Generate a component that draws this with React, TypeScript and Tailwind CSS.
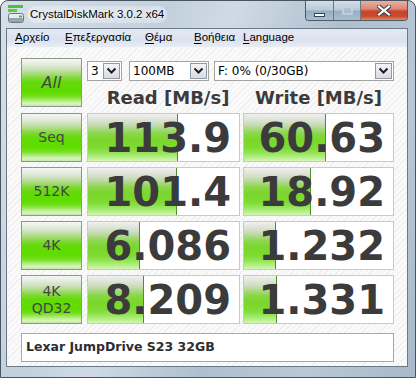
const results = [
  { label: ["Seq"], read: "113.9", readBar: 90, write: "60.63", writeBar: 82 },
  { label: ["512K"], read: "101.4", readBar: 89, write: "18.92", writeBar: 67 },
  { label: ["4K"], read: "6.086", readBar: 52, write: "1.232", writeBar: 32 },
  { label: ["4K", "QD32"], read: "8.209", readBar: 56, write: "1.331", writeBar: 33 },
];

const menu = [
  { text: "Αρχείο", w: "w-[50px]" },
  { text: "Επεξεργασία", w: "w-[80px]" },
  { text: "Θέμα", w: "w-[49px]" },
  { text: "Βοήθεια", w: "w-[49px]" },
  { text: "Language", w: "w-[60px]" },
];

function GreenButton({ children }: { children: React.ReactNode }) {
  return (
    <div className="flex h-[49px] w-[61px] shrink-0 flex-col items-center justify-center border border-[#8c998a] bg-[linear-gradient(180deg,#f6f7f4_0%,#e6ece0_10%,#d0e2c0_20%,#aedc84_30%,#82d83c_40%,#64da0a_50%,#5edc00_70%,#76e01e_80%,#aeec7a_88%,#d6f6bc_95%,#c2e6a4_100%)] font-['DejaVu_Sans',sans-serif] text-[14px] leading-[17px] text-[#454545]">
      {children}
    </div>
  );
}

function ResultCell({ value, bar, width }: { value: string; bar: number; width: string }) {
  return (
    <div className={`relative h-[49px] ${width} shrink-0 border border-[#c9c9c9] bg-white`}>
      <div
        className="absolute inset-y-0 left-0 border-r border-[#4f8f2a] bg-[linear-gradient(180deg,#f0f0f0_0%,#e0e6da_10%,#cadcbc_22%,#a8d87e_32%,#88d844_42%,#7ad62c_55%,#7edb30_72%,#92e454_82%,#b4ee86_92%,#d4f6b4_100%)]"
        style={{ width: bar }}
      />
      <div className="relative flex h-full items-center justify-end pr-[8px] pt-[1px] font-['DejaVu_Sans',sans-serif] text-[40px] font-bold leading-none text-[#3b3b3b]">
        {value}
      </div>
    </div>
  );
}

function Combo({ text, width, gap }: { text: string; width: string; gap: string }) {
  return (
    <div className={`flex h-[20px] ${width} ${gap} items-stretch border border-[#a3a3a3] bg-white`}>
      <span className="flex flex-1 items-center pl-[3px] font-['DejaVu_Sans',sans-serif] text-[12px] text-black">
        {text}
      </span>
      <span className="m-[1px] flex w-[17px] items-center justify-center border border-[#8f9aa8] bg-[linear-gradient(180deg,#f4f4f4,#dcdcdc)]">
        <svg width="11" height="8" viewBox="0 0 11 8">
          <path d="M1.5 1.5 L5.5 5.5 L9.5 1.5" fill="none" stroke="#1a2030" strokeWidth="2" />
        </svg>
      </span>
    </div>
  );
}

function AppIcon() {
  return (
    <svg width="16" height="19" viewBox="0 0 16 19">
      <rect x="0" y="0" width="15" height="3" fill="#48c43a" />
      <rect x="0" y="4" width="9" height="3" fill="#5ccc3c" />
      <rect x="0.5" y="8.5" width="15" height="9" rx="2" fill="#e8ecef" stroke="#6c7780" />
      <rect x="1" y="13" width="14" height="4" fill="#9aa4ad" />
      <rect x="11" y="10.5" width="3" height="2" fill="#3fbf2f" />
    </svg>
  );
}

export default function App() {
  return (
    <div className="relative h-[378px] w-[416px] overflow-hidden rounded-t-[8px] border border-[#4a545e] bg-[linear-gradient(112deg,#d6e0ea_0%,#c2d0de_30%,#cfdae5_42%,#aebfcf_62%,#b9c8d6_80%,#a7b9ca_100%)]">
      <div className="flex h-[27px] items-center pl-[7px]">
        <AppIcon />
        <span className="ml-[3px] rounded-full bg-white/30 px-[3px] font-['Segoe_UI','Liberation_Sans',sans-serif] text-[11.5px] text-black [text-shadow:0_0_6px_#ffffff,0_0_3px_#ffffff]">
          CrystalDiskMark 3.0.2 x64
        </span>
      </div>

      <div className="absolute right-[7px] top-0 flex h-[20px] overflow-hidden rounded-b-[4px] border border-t-0 border-[#4f5a66]">
        <div className="flex w-[28px] items-center justify-center border-r border-[#6c7886] bg-[linear-gradient(180deg,#d3dfe9_0%,#b9cad9_45%,#97afc4_55%,#a9bfd1_100%)]">
          <div className="mt-[8px] h-[4px] w-[11px] border border-[#39444f] bg-white" />
        </div>
        <div className="flex w-[27px] items-center justify-center border-r border-[#6c7886] bg-[linear-gradient(180deg,#d3dfe9_0%,#b9cad9_45%,#97afc4_55%,#a9bfd1_100%)]">
          <div className="h-[9px] w-[11px] border-2 border-[#c7d4df] bg-[#aebfcf] opacity-80" />
        </div>
        <div className="flex w-[46px] items-center justify-center bg-[linear-gradient(180deg,#e9b0a2_0%,#dc8a76_40%,#c8462e_55%,#c54a2e_80%,#e08d5e_100%)]">
          <svg width="14" height="11" viewBox="0 0 14 11">
            <path d="M2 1.5 L12 9.5 M12 1.5 L2 9.5" stroke="#3a3f46" strokeWidth="4.2" strokeLinecap="square" />
            <path d="M2 1.5 L12 9.5 M12 1.5 L2 9.5" stroke="#ffffff" strokeWidth="2.2" strokeLinecap="square" />
          </svg>
        </div>
      </div>

      <div className="ml-[5px] mr-[7px] border border-[#6b7886]">
        <div className="flex h-[19px] items-center border-b border-[#f4f6fa] bg-[linear-gradient(180deg,#e4eaf4_0%,#dbe2ee_60%,#e8ecf4_100%)] pl-[8px] font-['Segoe_UI','Liberation_Sans',sans-serif] text-[11.5px] text-black">
          {menu.map((m) => (
            <span key={m.text} className={m.w}>
              <span className="underline underline-offset-2">{m.text[0]}</span>
              {m.text.slice(1)}
            </span>
          ))}
        </div>

        <div className="h-[318px] bg-[repeating-linear-gradient(-45deg,#fafafa_0px,#fafafa_3px,#efefef_3px,#efefef_4px)] pl-[14px]">
          <div className="flex items-start">
            <div className="mt-[10px]">
              <GreenButton>
                <span className="text-[16px] italic">All</span>
              </GreenButton>
            </div>
            <div className="ml-[5px] flex flex-col">
              <div className="mt-[13px] flex">
                <Combo text="3" width="w-[35px]" gap="ml-0" />
                <Combo text="100MB" width="w-[80px]" gap="ml-[7px]" />
                <Combo text="F: 0% (0/30GB)" width="w-[180px]" gap="ml-[5px]" />
              </div>
              <div className="mt-[6px] flex font-['DejaVu_Sans',sans-serif] text-[18px] font-bold leading-[21px] text-[#3b3b3b]">
                <div className="w-[156px] pl-[6px] text-center">Read [MB/s]</div>
                <div className="w-[151px] text-center">Write [MB/s]</div>
              </div>
            </div>
          </div>

          {results.map((r) => (
            <div key={r.read} className="mt-[5px] flex">
              <GreenButton>
                {r.label.map((l) => (
                  <span key={l}>{l}</span>
                ))}
              </GreenButton>
              <div className="ml-[5px]">
                <ResultCell value={r.read} bar={r.readBar} width="w-[153px]" />
              </div>
              <div className="ml-[3px]">
                <ResultCell value={r.write} bar={r.writeBar} width="w-[151px]" />
              </div>
            </div>
          ))}

          <div className="mt-[9px] flex h-[29px] w-[373px] items-center border border-[#a9a9a9] border-b-[#9cab98] border-r-[#9cab98] bg-white pl-[4px] font-['DejaVu_Sans',sans-serif] text-[12.5px] font-bold text-[#2e2e2e]">
            Lexar JumpDrive S23 32GB
          </div>
        </div>
      </div>
    </div>
  );
}
